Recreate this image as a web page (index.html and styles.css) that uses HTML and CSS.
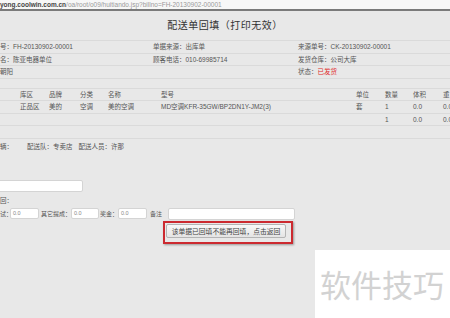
FILE: index.html
```html
<!DOCTYPE html>
<html>
<head>
  <meta charset="utf-8">
  <title>配送单回填</title>
  <link rel="stylesheet" href="styles.css">
</head>
<body>
  <div class="urlbar"><b>yong.coolwin.com.cn</b><span>/oa/root/o09/huitiando.jsp?billno=FH-20130902-00001</span></div>

  <div class="page">
    <h1 class="title">配送单回填（打印无效）</h1>

    <div class="info">
      <div class="cell">号：FH-20130902-00001</div>
      <div class="cell">单据来源：出库单</div>
      <div class="cell">来源单号：CK-20130902-00001</div>
      <div class="cell">名：陈亚电器单位</div>
      <div class="cell">顾客电话：010-69985714</div>
      <div class="cell">发货仓库：公司大库</div>
      <div class="cell">朝阳</div>
      <div class="cell"></div>
      <div class="cell">状态：<span class="red">已发货</span></div>
    </div>

    <div class="blank"></div>

    <div class="goods">
      <div class="grow head">
        <span>库区</span><span>品牌</span><span>分类</span><span>名称</span><span>型号</span><span>单位</span><span>数量</span><span>体积</span><span>重</span>
      </div>
      <div class="grow">
        <span>正品区</span><span>美的</span><span>空调</span><span>美的空调</span><span>MD空调KFR-35GW/BP2DN1Y-JM2(3)</span><span>套</span><span>1</span><span>0.0</span><span>0.0</span>
      </div>
      <div class="grow">
        <span></span><span></span><span></span><span></span><span></span><span></span><span>1</span><span>0.0</span><span>0.0</span>
      </div>
      <div class="grow"></div>
    </div>

    <div class="team">
      <span>辆：</span>
      <span>配送队：专卖店</span>
      <span>配送人员：许那</span>
    </div>

    <div class="form">
      <div class="field wide"></div>
      <div class="label">回：</div>
      <div class="line">
        <span class="lb w1">试：</span><span class="field num n1">0.0</span>
        <span class="lb w2">其它提成：</span><span class="field num n2">0.0</span>
        <span class="lb w3">奖金：</span><span class="field num n3">0.0</span>
        <span class="lb w4">备注</span><span class="field memo"></span>
      </div>
      <div class="mark">
        <button class="back">该单据已回填不能再回填，点击返回</button>
      </div>
    </div>
  </div>

  <div class="watermark">软件技巧</div>
</body>
</html>
```

FILE: styles.css
```css
* {
    margin: 0;
    padding: 0;
    box-sizing: border-box;
}
body {
    width: 450px;
    height: 318px;
    overflow: hidden;
    background: #e8e8e8;
    font-family: "Liberation Sans", "Noto Sans CJK SC", sans-serif;
    font-size: 6.5px;
    color: #555;
    position: relative;
}
.urlbar {
    height: 11px;
    line-height: 9px;
    background: #f7f7f7;
    border-bottom: 2px solid #7a7a7a;
    white-space: nowrap;
    color: #9a9a9a;
}
.urlbar b {
    color: #444;
}
.title {
    height: 29px;
    line-height: 29px;
    text-align: center;
    font-size: 10px;
    font-weight: normal;
    color: #333;
    letter-spacing: 0.5px;
}
.info {
    display: grid;
    grid-template-columns: 153px 145px 1fr;
    border-top: 1px solid #dadada;
}
.cell {
    height: 12.5px;
    line-height: 12px;
    border-bottom: 1px solid #dadada;
    white-space: nowrap;
}
.red {
    color: #e02a2a;
}
.blank {
    height: 10px;
    border-bottom: 1px solid #dadada;
}
.grow {
    display: grid;
    grid-template-columns: 29px 31px 28px 53px 195px 29px 28px 30px 1fr;
    padding-left: 20px;
    height: 12.5px;
    line-height: 12px;
    border-bottom: 1px solid #dadada;
    white-space: nowrap;
    overflow: hidden;
}
.team {
    display: flex;
    gap: 6px;
    margin-top: 2px;
    height: 12px;
    line-height: 12px;
}
.team span:first-child {
    width: 21px;
}
.form {
    padding-top: 27px;
}
.field {
    display: inline-block;
    background: #fff;
    border: 1px solid #d4d4d4;
    border-radius: 2px;
}
.wide {
    display: block;
    width: 86px;
    height: 12px;
    margin-left: -3px;
}
.label {
    height: 16px;
    line-height: 18px;
}
.line {
    display: flex;
    align-items: center;
    height: 12px;
    white-space: nowrap;
    font-size: 6px;
}
.lb {
    flex: none;
}
.w1 { width: 10px; }
.w2 { width: 32px; padding-left: 2px; }
.w3 { width: 19px; padding-left: 1px; }
.w4 { width: 21px; padding-left: 3px; }
.num {
    flex: none;
    height: 11px;
    line-height: 8px;
    padding-left: 2px;
    font-size: 5.5px;
    color: #888;
}
.n1 { width: 29px; }
.n2 { width: 28px; }
.n3 { width: 29px; }
.memo {
    flex: none;
    width: 127px;
    height: 12px;
}
.mark {
    margin: 1px 0 0 163px;
    width: 130px;
    height: 23px;
    border: 2px solid #cc2a30;
    box-shadow: 1px 1px 2px rgba(0, 0, 0, 0.35);
    padding: 1px 0 0 1px;
}
.back {
    width: 120px;
    height: 14px;
    font-family: inherit;
    font-size: 6.8px;
    color: #444;
    background: linear-gradient(#f8f8f8, #e4e4e4);
    border: 1px solid #b4b4b4;
    border-radius: 2px;
}
.watermark {
    position: absolute;
    left: 315px;
    top: 250px;
    right: 0;
    bottom: 0;
    background: #fff;
    padding: 17px 0 0 5px;
    font-family: "Noto Sans CJK SC", sans-serif;
    font-size: 31px;
    line-height: 34px;
    color: #d2d2d2;
    white-space: nowrap;
}
```
